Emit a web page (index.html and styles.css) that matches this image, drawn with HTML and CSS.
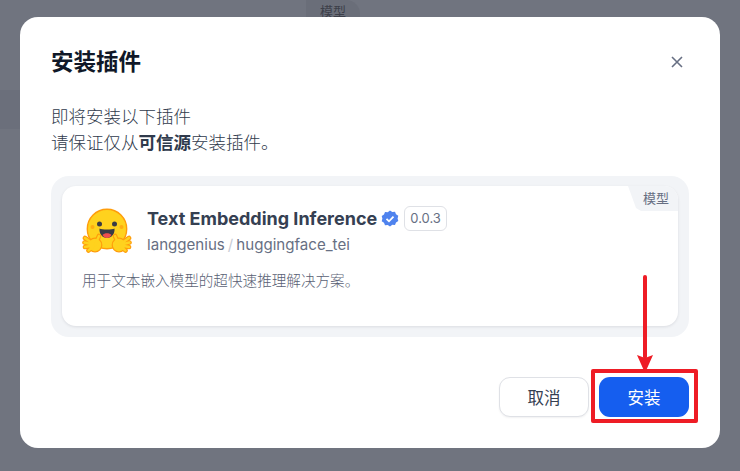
FILE: index.html
```html
<!DOCTYPE html>
<html lang="zh">
<head>
<meta charset="utf-8">
<title>安装插件</title>
<link rel="stylesheet" href="styles.css">
</head>
<body>
<div class="backdrop">
  <div class="bg-band"></div>
  <span class="bg-tag">模型</span>
  <div class="modal">
    <header class="modal-head">
      <h1 class="modal-title">安装插件</h1>
      <svg class="close" width="12" height="12" viewBox="0 0 12 12"><path d="M1 1l10 10M11 1L1 11" stroke="#676f83" stroke-width="1.6" fill="none"/></svg>
    </header>
    <p class="intro">即将安装以下插件<br>请保证仅从<b>可信源</b>安装插件。</p>
    <div class="panel">
      <div class="card">
        <span class="corner">模型</span>
        <div class="card-top">
          <svg class="logo" width="50" height="50" viewBox="0 0 50 50">
            <circle cx="25" cy="22" r="19.700" fill="#ffd21e" stroke="#ff9d0b" stroke-width="1.400"/>
            <circle cx="17.500" cy="17" r="2.500" fill="#3a3b45"/>
            <circle cx="32.500" cy="17" r="2.500" fill="#3a3b45"/>
            <circle cx="10.500" cy="20" r="2" fill="#ff9d0b" opacity=".7"/>
            <circle cx="39.500" cy="20" r="2" fill="#ff9d0b" opacity=".7"/>
            <path d="M17.500 21.500c2.500 1.400 12.500 1.400 15 0 .5 5.500-3 9.500-7.500 9.500s-8-4-7.500-9.500z" fill="#3a3b45"/>
            <path d="M20.500 28c2-2.200 7-2.200 9 0-1.100 2-2.600 3-4.500 3s-3.400-1-4.500-3z" fill="#ef4e4e"/>
            <g class="hand-outline">
              <path d="M13 38L3 31M13 38L2.500 35.500M13 38L3 40M13 38L6.500 43.500"/>
              <path d="M13 38L17 29"/>
              <path d="M37 38L47 31M37 38L47.500 35.500M37 38L47 40M37 38L43.500 43.500"/>
              <path d="M37 38L33 29"/>
            </g>
            <circle cx="13" cy="38" r="6.800" fill="#ffd21e" stroke="#ff9d0b" stroke-width="1.200"/>
            <circle cx="37" cy="38" r="6.800" fill="#ffd21e" stroke="#ff9d0b" stroke-width="1.200"/>
            <g class="hand-fill">
              <path d="M13 38L3 31M13 38L2.500 35.500M13 38L3 40M13 38L6.500 43.500"/>
              <path d="M13 38L17 29"/>
              <path d="M37 38L47 31M37 38L47.500 35.500M37 38L47 40M37 38L43.500 43.500"/>
              <path d="M37 38L33 29"/>
            </g>
          </svg>
          <div class="meta">
            <div class="name-row">
              <span class="name">Text Embedding Inference</span>
              <svg class="verified" width="18" height="18" viewBox="0 0 18 18">
                <path d="M9 .6l2.300 1.500 2.700-.3 1 2.500 2.300 1.400-.7 2.700.7 2.700-2.300 1.400-1 2.500-2.700-.3L9 16.400l-2.300-1.500-2.700.3-1-2.500L.7 11.300l.7-2.700-.7-2.700 2.300-1.400 1-2.500 2.700.3z" fill="#4f83ee"/>
                <path d="M5.500 8.800l2.500 2.500 4.500-4.600" stroke="#fff" stroke-width="1.800" fill="none"/>
              </svg>
              <span class="version">0.0.3</span>
            </div>
            <div class="org">langgenius<i class="slash">/</i>huggingface_tei</div>
          </div>
        </div>
        <p class="desc">用于文本嵌入模型的超快速推理解决方案。</p>
      </div>
    </div>
    <footer class="actions">
      <button class="btn btn-cancel" type="button">取消</button>
      <button class="btn btn-install" type="button">安装</button>
    </footer>
  </div>
  <svg class="arrow" width="18" height="100" viewBox="0 0 18 100">
    <path d="M9 3v80" stroke="#ee1c25" stroke-width="4" stroke-linecap="round" fill="none"/>
    <path d="M1 81l8 3 8-3-8 18z" fill="#ee1c25"/>
  </svg>
  <div class="highlight"></div>
</div>
</body>
</html>
```
FILE: styles.css
```css
* { box-sizing: border-box; }
html, body { margin: 0; height: 100%; }
body {
  font-family: Inter, "Noto Sans CJK SC", "Liberation Sans", sans-serif;
  overflow: hidden;
}
.backdrop {
  position: relative;
  width: 740px;
  height: 471px;
  background: #70747f;
  overflow: hidden;
}
.bg-band {
  position: absolute;
  left: 0;
  top: 90px;
  width: 20px;
  height: 39px;
  background: #6b6f7b;
}
.bg-tag {
  position: absolute;
  left: 306px;
  top: 0;
  height: 30px;
  padding: 3px 14px 0;
  font-size: 13px;
  line-height: 17px;
  color: #3d404a;
  background: #6a6e79;
  border-radius: 0 14px 0 0;
}
.modal {
  position: absolute;
  left: 20px;
  top: 17px;
  width: 700px;
  height: 431px;
  padding: 28px 31px 31px;
  background: #fff;
  border-radius: 18px;
  display: flex;
  flex-direction: column;
}
.modal-head {
  display: flex;
  justify-content: space-between;
  align-items: center;
  height: 34px;
}
.modal-title {
  margin: 0;
  font-size: 22.500px;
  line-height: 34px;
  font-weight: 700;
  color: #101828;
}
.close { margin-right: 6px; }
.intro {
  margin: 25px 0 0;
  font-size: 17.500px;
  line-height: 26px;
  font-weight: 300;
  color: #2f3a4c;
}
.intro b { font-weight: 700; }
.panel {
  margin-top: 20px;
  height: 161px;
  padding: 10px 11px 11px;
  background: #f2f4f7;
  border-radius: 18px;
}
.card {
  position: relative;
  height: 140px;
  padding: 20px 20px 0;
  background: #fff;
  border-radius: 14px;
  box-shadow: 0 1px 3px rgba(16, 24, 40, .1);
}
.corner {
  position: absolute;
  right: 0;
  top: 0;
  width: 50px;
  height: 25px;
  padding-left: 15px;
  font-size: 13px;
  line-height: 24px;
  color: #676f83;
  background: #f2f4f7;
  border-radius: 0 14px 0 0;
  clip-path: polygon(0 0, 100% 0, 100% 100%, 13px 100%, 8px 88%);
}
.card-top {
  display: flex;
  gap: 15px;
}
.logo { flex: none; margin-top: 1px; }
.hand-outline path {
  fill: none;
  stroke: #ff9d0b;
  stroke-width: 4.600;
  stroke-linecap: round;
}
.hand-fill path {
  fill: none;
  stroke: #ffd21e;
  stroke-width: 2.400;
  stroke-linecap: round;
}
.name-row {
  display: flex;
  align-items: center;
  height: 25px;
}
.name {
  font-size: 18px;
  line-height: 25px;
  font-weight: 700;
  color: #354052;
}
.verified { margin-left: 4px; }
.version {
  margin-left: 5px;
  height: 25px;
  padding: 0 5px;
  font-size: 13px;
  line-height: 23px;
  color: #676f83;
  border: 1px solid #dfe1e6;
  border-radius: 6px;
}
.org {
  margin-top: 3px;
  font-size: 15.100px;
  line-height: 22px;
  color: #676f83;
}
.slash {
  margin: 0 3px;
  font-style: normal;
  color: #c8ccd4;
}
.desc {
  margin: 13px 0 0;
  font-size: 14.600px;
  line-height: 22px;
  font-weight: 300;
  color: #596174;
}
.actions {
  margin-top: auto;
  display: flex;
  justify-content: flex-end;
  gap: 10px;
}
.btn {
  width: 90px;
  height: 40px;
  border-radius: 11px;
  font-family: inherit;
  font-size: 16.500px;
  padding: 0;
}
.btn-cancel {
  background: #fff;
  color: #354052;
  border: 1px solid #dfe1e6;
  box-shadow: 0 1px 2px rgba(16, 24, 40, .06);
}
.btn-install {
  background: #155eef;
  color: #fff;
  border: 0;
}
.arrow {
  position: absolute;
  left: 635.500px;
  top: 274px;
}
.highlight {
  position: absolute;
  left: 591px;
  top: 369px;
  width: 107px;
  height: 54px;
  border: 4px solid #ee1c25;
  border-radius: 2px;
}
```
